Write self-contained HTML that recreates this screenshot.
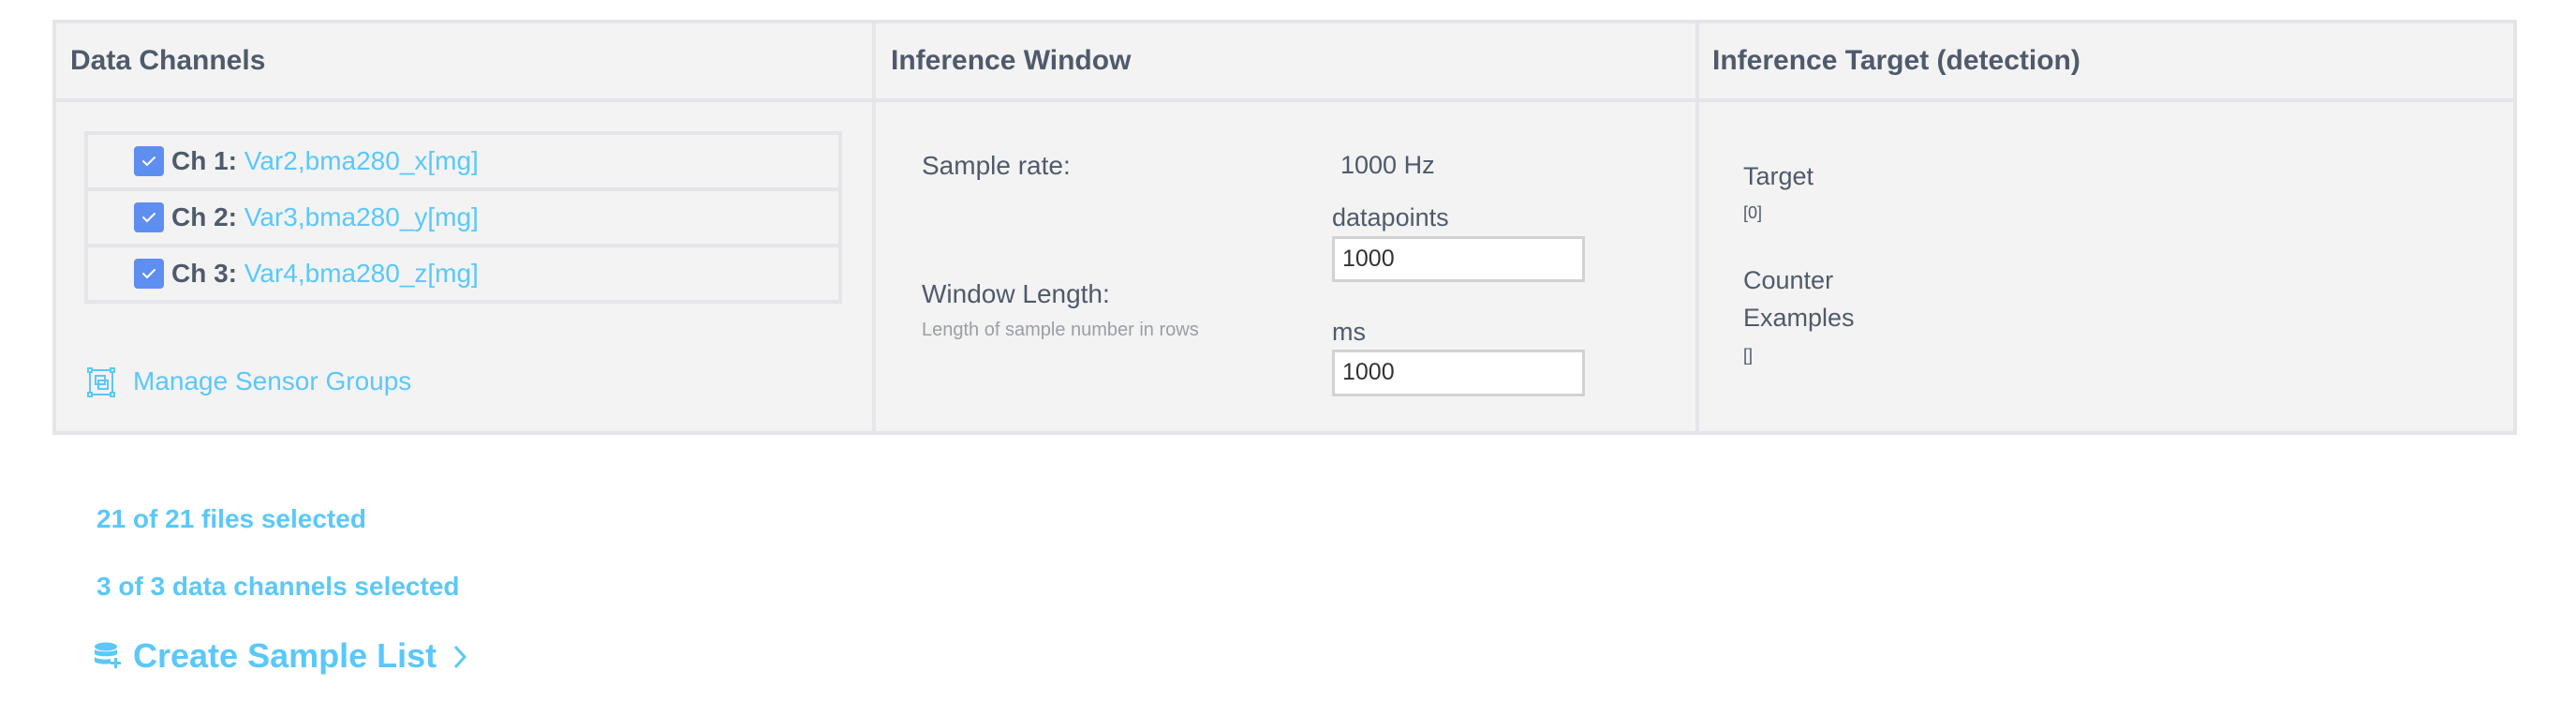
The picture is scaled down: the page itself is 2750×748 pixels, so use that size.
<!DOCTYPE html>
<html><head><meta charset="utf-8"><style>
*{margin:0;padding:0;box-sizing:border-box}
body{width:2750px;height:748px;background:#fff;font-family:"Liberation Sans",Arial,sans-serif;color:#4f5a6b;position:relative;overflow:hidden}
.a{position:absolute;white-space:nowrap}
.cell{position:absolute;background:#f3f3f3;border:4px solid #e5e5e9}
.h{font-size:30px;font-weight:bold;color:#4f5a6b}
.blue{color:#5ac8fa}
.inp{position:absolute;background:#fff;border:3px solid #d2d2d2;font-size:25px;padding-left:8px;line-height:42px;color:#333}
</style></head><body>
<div class="cell" style="left:56px;top:21px;width:879px;height:88px"></div>
<div class="cell" style="left:931px;top:21px;width:883px;height:88px"></div>
<div class="cell" style="left:1810px;top:21px;width:877px;height:88px"></div>
<div class="cell" style="left:56px;top:105px;width:879px;height:359px"></div>
<div class="cell" style="left:931px;top:105px;width:883px;height:359px"></div>
<div class="cell" style="left:1810px;top:105px;width:877px;height:359px"></div>

<div class="a h" style="left:75px;top:48px">Data Channels</div>
<div class="a h" style="left:951px;top:48px">Inference Window</div>
<div class="a h" style="left:1828px;top:48px">Inference Target (detection)</div>

<div class="a" style="left:90px;top:140px;width:809px;height:64px;border:4px solid #e5e5e9"></div>
<div class="a" style="left:90px;top:200px;width:809px;height:64px;border:4px solid #e5e5e9"></div>
<div class="a" style="left:90px;top:260px;width:809px;height:64px;border:4px solid #e5e5e9"></div>
<svg class="a" style="left:143px;top:156px" width="32" height="152" viewBox="0 0 32 152">
<g fill="#5e8ff0"><rect x="0" y="0" width="32" height="32" rx="4"/><rect x="0" y="60" width="32" height="32" rx="4"/><rect x="0" y="120" width="32" height="32" rx="4"/></g>
<g fill="none" stroke="#fff" stroke-width="2" stroke-linecap="round"><path d="M10 16l4 4 8-8"/><path d="M10 76l4 4 8-8"/><path d="M10 136l4 4 8-8"/></g>
</svg>
<div class="a" style="left:183px;top:156px;font-size:28px;line-height:32px"><b>Ch 1:</b> <span class="blue">Var2,bma280_x[mg]</span></div>
<div class="a" style="left:183px;top:216px;font-size:28px;line-height:32px"><b>Ch 2:</b> <span class="blue">Var3,bma280_y[mg]</span></div>
<div class="a" style="left:183px;top:276px;font-size:28px;line-height:32px"><b>Ch 3:</b> <span class="blue">Var4,bma280_z[mg]</span></div>

<svg class="a" style="left:93px;top:392px" width="30" height="32" viewBox="0 0 30 32" fill="none" stroke="#5ac8fa" stroke-width="2">
<rect x="3" y="3" width="24" height="26"/><rect x="9" y="9" width="10" height="9"/><rect x="12" y="14" width="10" height="9"/>
<rect x="1" y="1" width="4" height="4" fill="#fff"/><rect x="25" y="1" width="4" height="4" fill="#fff"/><rect x="1" y="27" width="4" height="4" fill="#fff"/><rect x="25" y="27" width="4" height="4" fill="#fff"/>
</svg>
<div class="a blue" style="left:142px;top:391px;font-size:28px">Manage Sensor Groups</div>

<div class="a" style="left:984px;top:161px;font-size:28px">Sample rate:</div>
<div class="a" style="left:1431px;top:161px;font-size:27px">1000 Hz</div>
<div class="a" style="left:1422px;top:217px;font-size:27px">datapoints</div>
<div class="inp" style="left:1422px;top:252px;width:270px;height:49px">1000</div>
<div class="a" style="left:984px;top:298px;font-size:28px">Window Length:</div>
<div class="a" style="left:984px;top:341px;font-size:20px;color:#9a9ea6">Length of sample number in rows</div>
<div class="a" style="left:1422px;top:339px;font-size:27px">ms</div>
<div class="inp" style="left:1422px;top:373px;width:270px;height:50px">1000</div>

<div class="a" style="left:1861px;top:173px;font-size:27px">Target</div>
<div class="a" style="left:1861px;top:217px;font-size:18px">[0]</div>
<div class="a" style="left:1861px;top:284px;font-size:27px">Counter</div>
<div class="a" style="left:1861px;top:324px;font-size:27px">Examples</div>
<div class="a" style="left:1861px;top:369px;font-size:18px">[]</div>

<div class="a blue" style="left:103px;top:538px;font-size:28px;font-weight:bold">21 of 21 files selected</div>
<div class="a blue" style="left:103px;top:610px;font-size:28px;font-weight:bold">3 of 3 data channels selected</div>
<svg class="a" style="left:100px;top:685px" width="30" height="30" viewBox="0 0 30 30" fill="#5ac8fa">
<ellipse cx="13" cy="5" rx="12" ry="4.5"/><path d="M1 8c3 3 21 3 24 0v5c-3 3-21 3-24 0z"/><path d="M1 16c3 3 15 3 17 2v5c-3 1-14 1-17-2z"/>
<path d="M22 17h3v4h4v3h-4v4h-3v-4h-4v-3h4z"/>
</svg>
<div class="a blue" style="left:142px;top:679px;font-size:36px;font-weight:bold">Create Sample List</div>
<svg class="a" style="left:482px;top:687px" width="18" height="28" viewBox="0 0 18 28" fill="none" stroke="#5ac8fa" stroke-width="3"><path d="M4 3l10 11-10 11"/></svg>
</body></html>
